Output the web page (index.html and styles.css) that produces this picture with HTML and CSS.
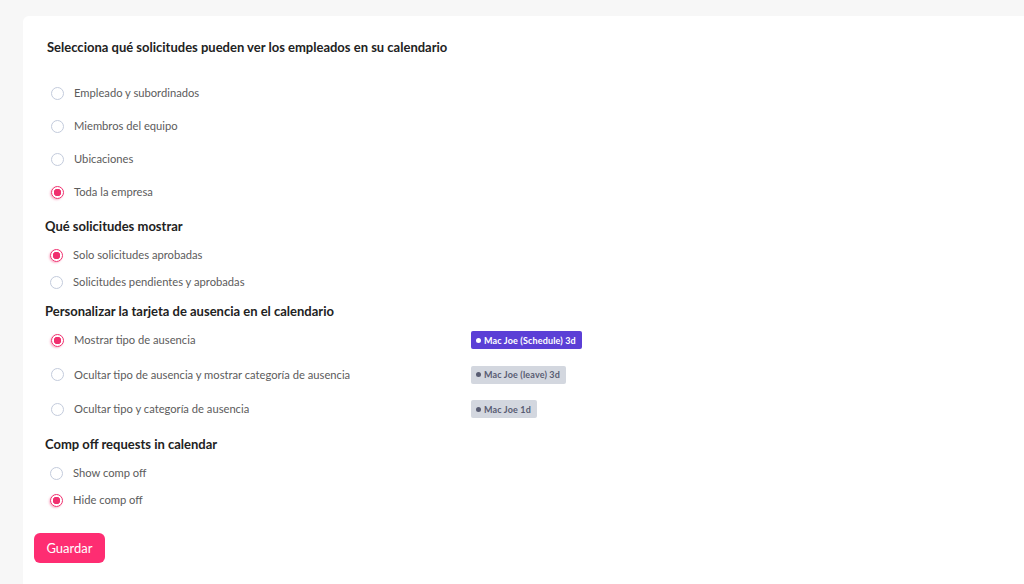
FILE: index.html
```html
<!DOCTYPE html>
<html lang="es">
  <head>
    <meta charset="UTF-8" />
    <meta name="viewport" content="width=device-width, initial-scale=1.0" />
    <title>Calendario</title>
    <link rel="stylesheet" href="styles.css">
  </head>
  <body>
    <div class="card">
      <div class="title">Selecciona qué solicitudes pueden ver los empleados en su calendario</div>
      <div class="group group-wide">
        <label class="option"><span class="radio"></span>Empleado y subordinados</label>
        <label class="option"><span class="radio"></span>Miembros del equipo</label>
        <label class="option"><span class="radio"></span>Ubicaciones</label>
        <label class="option"><span class="radio checked"></span>Toda la empresa</label>
      </div>

      <div class="heading">Qué solicitudes mostrar</div>
      <div class="group group-tight">
        <label class="option"><span class="radio checked"></span>Solo solicitudes aprobadas</label>
        <label class="option"><span class="radio"></span>Solicitudes pendientes y aprobadas</label>
      </div>

      <div class="heading">Personalizar la tarjeta de ausencia en el calendario</div>
      <div class="group group-cards">
        <div class="card-row">
          <label class="option"><span class="radio checked"></span>Mostrar tipo de ausencia</label>
          <span class="tag tag-purple"><span class="dot"></span>Mac Joe (Schedule) 3d</span>
        </div>
        <div class="card-row">
          <label class="option"><span class="radio"></span>Ocultar tipo de ausencia y mostrar categoría de ausencia</label>
          <span class="tag"><span class="dot"></span>Mac Joe (leave) 3d</span>
        </div>
        <div class="card-row">
          <label class="option"><span class="radio"></span>Ocultar tipo y categoría de ausencia</label>
          <span class="tag"><span class="dot"></span>Mac Joe 1d</span>
        </div>
      </div>

      <div class="heading">Comp off requests in calendar</div>
      <div class="group group-tight">
        <label class="option"><span class="radio"></span>Show comp off</label>
        <label class="option"><span class="radio checked"></span>Hide comp off</label>
      </div>

      <button class="save">Guardar</button>
    </div>
  </body>
</html>
```

FILE: styles.css
```css
body {
  margin: 0;
  background-color: #f7f7f7;
  font-family: Lato, "Open Sans", sans-serif;
  color: #222;
}
.card {
  margin: 16px 0 0 23px;
  background: #fff;
  border-radius: 6px 0 0 0;
  min-height: 568px;
  padding: 23px 0 0 22px;
  box-sizing: border-box;
}
.title {
  font-size: 13px;
  font-weight: bold;
  color: #222;
  margin-left: 2px;
  line-height: 16px;
}
.heading {
  font-size: 13px;
  font-weight: bold;
  color: #222;
  line-height: 16px;
}
.group {
  display: flex;
  flex-direction: column;
}
.group-wide {
  padding: 30px 0 18px 6px;
  gap: 17px;
}
.group-tight {
  padding: 13px 0 13px 5px;
  gap: 11px;
}
.group-cards {
  padding: 12px 0 18px 6px;
  gap: 16.5px;
}
.option {
  display: flex;
  align-items: center;
  font-size: 11.2px;
  color: #5c5c5c;
  line-height: 16px;
}
.radio {
  width: 11px;
  height: 11px;
  border: 1.5px solid #c3cbdc;
  border-radius: 50%;
  margin-right: 10px;
  box-sizing: content-box;
  flex-shrink: 0;
}
.radio.checked {
  border-color: #f0306f;
  background: radial-gradient(circle, #f0306f 0 3.5px, #fff 4px);
  box-shadow: -1px 1px 2px rgba(240, 48, 111, 0.35);
}
.card-row {
  display: flex;
  align-items: center;
  height: 18px;
}
.card-row .option {
  width: 420px;
}
.tag {
  display: inline-flex;
  align-items: center;
  height: 18px;
  padding: 0 6px 0 5px;
  border-radius: 2px;
  background: #d3d7df;
  color: #585c72;
  font-size: 9px;
  font-weight: bold;
  letter-spacing: 0.15px;
  box-sizing: border-box;
}
.tag-purple {
  background: #5b3fd6;
  color: #fff;
}
.dot {
  width: 5px;
  height: 5px;
  border-radius: 50%;
  background: currentColor;
  margin-right: 3px;
}
.save {
  margin: 12px 0 0 -11px;
  width: 71px;
  height: 30px;
  border: none;
  border-radius: 6px;
  background: #fe2d72;
  color: #fff;
  font-family: inherit;
  font-size: 13px;
}
```
